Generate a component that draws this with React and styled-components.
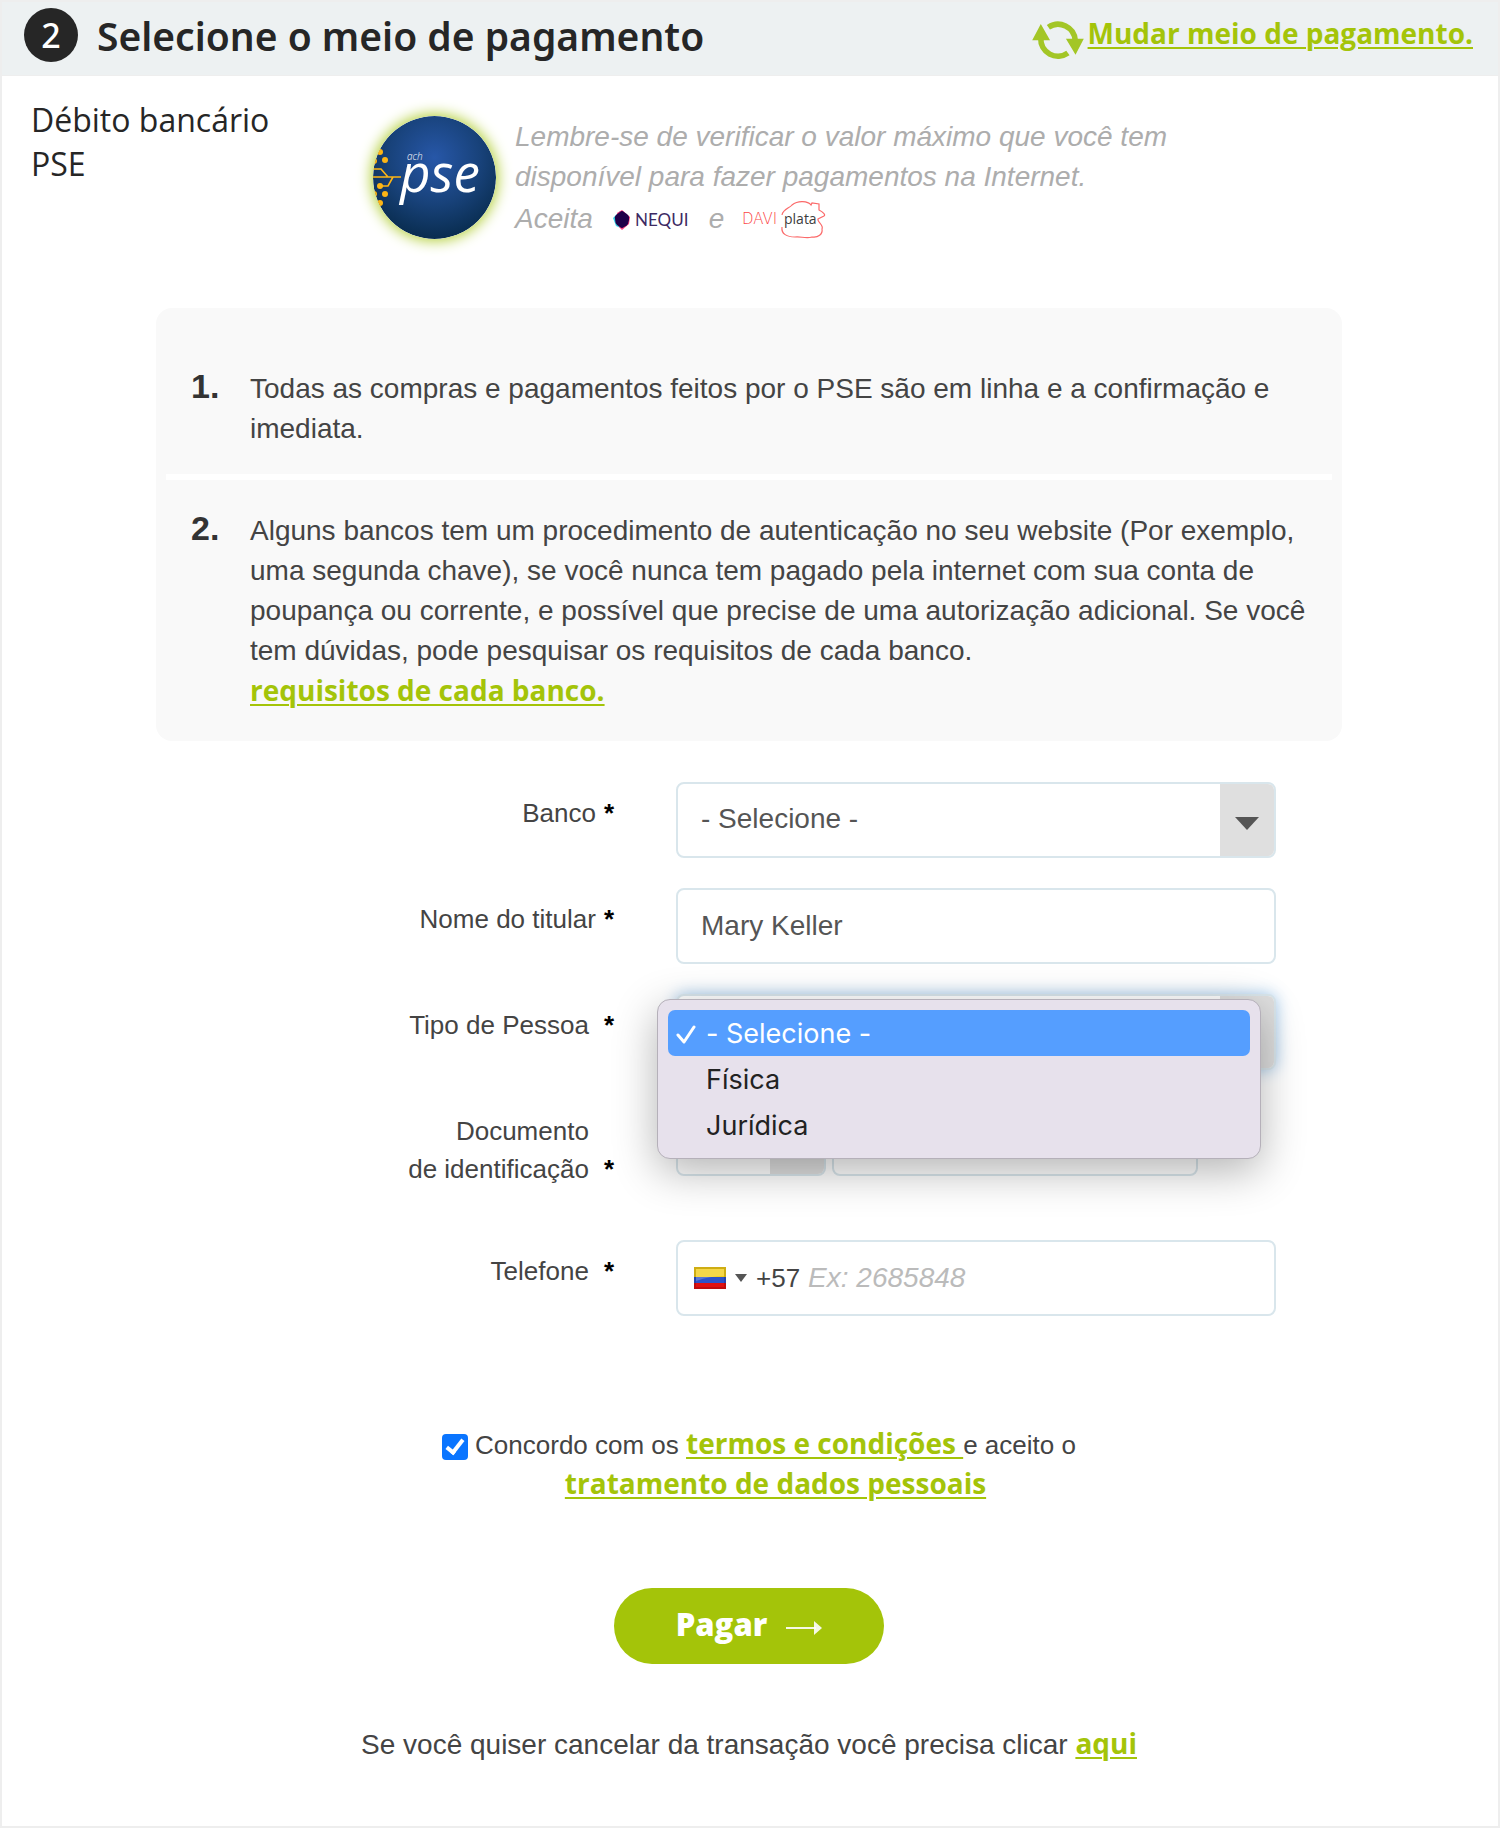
import React from "react";
import styled, { createGlobalStyle, css } from "styled-components";

const GlobalStyle = createGlobalStyle`
  *, *::before, *::after { box-sizing: border-box; }
  body {
    margin: 0;
    background: #fff;
    color: #444;
    font-family: "Liberation Sans", Arial, sans-serif;
    font-size: 28px;
    line-height: 40px;
  }
`;

const Page = styled.main`
  border: 2px solid #eee;
  padding-bottom: 61px;
`;

const Header = styled.header`
  display: flex;
  align-items: flex-start;
  gap: 19px;
  min-height: 74px;
  padding: 6px 25px 0 22px;
  background: #edf1f2;
  border-bottom: 1px solid #eee;
`;

const StepNumber = styled.span`
  flex: none;
  width: 54px;
  height: 54px;
  border-radius: 50%;
  background: #262626;
  color: #fff;
  font: 500 34px/54px "Noto Sans", sans-serif;
  text-align: center;
`;

const Title = styled.h1`
  flex: 1;
  margin: 0;
  color: #262626;
  font: 600 39px/56px "Noto Sans", sans-serif;
`;

const Link = styled.a`
  color: #a4c409;
  font-family: "Open Sans", sans-serif;
  font-weight: 700;
  font-size: 28px;
  line-height: 28px;
  text-decoration: underline;
  text-decoration-thickness: 2px;
  text-underline-offset: 3px;
`;

const BlockLink = styled(Link)`
  display: block;
  line-height: 38px;
`;

const ChangeMethod = styled.div`
  display: flex;
  align-items: flex-start;
  gap: 4px;
  padding-top: 6px;

  svg { margin-top: 5px; }
`;

const Method = styled.section`
  display: flex;
  align-items: flex-start;
  padding: 22px 29px 0;
  margin-bottom: 67px;
`;

const MethodName = styled.h2`
  flex: none;
  width: 342px;
  margin: 0;
  padding-right: 60px;
  color: #262626;
  font: 400 32px/44px "Open Sans", sans-serif;
`;

const MethodLogo = styled.svg`
  flex: none;
  width: 123px;
  height: 123px;
  margin-top: 18px;
  border-radius: 50%;
  box-shadow: 0 0 14px 2px #b3cf3a;
`;

const MethodNote = styled.div`
  max-width: 720px;
  margin: 19px 0 0 19px;
  color: #adadad;
  font-style: italic;

  p { margin: 0; }
`;

const Accepted = styled.p`
  display: flex;
  align-items: center;
  gap: 18px;
  height: 44px;

  svg {
    margin-top: 2px;
    font-style: normal;
  }
`;

const Content = styled.div`
  padding-right: 2px;
`;

const Notes = styled.ol`
  width: calc(100% - 40px);
  max-width: 1186px;
  margin: 0 auto 41px;
  padding: 30px 10px 0;
  border-radius: 16px;
  background: #f9f9f9;
  list-style: none;
`;

const Note = styled.li`
  display: flex;
  padding: 31px 16px 32px 25px;

  & + & {
    border-top: 6px solid #fff;
  }
  &:first-child {
    padding-bottom: 25px;
  }
`;

const NoteNumber = styled.b`
  flex: none;
  width: 59px;
  color: #333;
  font-size: 34px;
  line-height: 34px;
`;

const Form = styled.form`
  width: calc(100% - 40px);
  max-width: 1186px;
  margin: 0 auto;
`;

const Row = styled.div`
  display: grid;
  grid-template-columns: 458px minmax(0, 600px);
  align-items: start;
  column-gap: 62px;
  margin-bottom: ${(p) => (p.$last ? "109px" : p.$spaced ? "52px" : "30px")};
`;

const Label = styled.label`
  display: flex;
  justify-content: flex-end;
  align-items: flex-end;
  gap: ${(p) => (p.$wide ? "15px" : "8px")};
  padding-top: 12px;
  font-size: 26px;
  line-height: 38px;
  text-align: right;

  b { color: #000; }
`;

const field = css`
  display: block;
  width: 100%;
  height: 76px;
  border: 2px solid #d9e6ec;
  border-radius: 8px;
  background: #fff;
  color: #555;
  font: 400 28px/40px "Liberation Sans", Arial, sans-serif;
  outline: none;
`;

const Input = styled.input`
  ${field}
  padding: 0 23px;
`;

const Select = styled.select`
  ${field}
  appearance: none;
  padding: 0 60px 2px 23px;
  box-shadow: ${(p) => (p.$active ? "0 0 16px #a3cbee" : "none")};
`;

const SelectBox = styled.div`
  position: relative;
`;

const Arrow = styled.span`
  position: absolute;
  top: 2px;
  right: 2px;
  bottom: 2px;
  width: 54px;
  display: grid;
  place-items: center;
  padding-top: 6px;
  border-radius: 0 6px 6px 0;
  background: #dfdfdf;
  pointer-events: none;
`;

const Caret = styled.i`
  border: solid transparent;
  border-width: ${(p) => (p.$small ? "8px 6px 0" : "13px 12px 0")};
  border-top-color: #555;
`;

const OptionList = styled.ul`
  position: absolute;
  z-index: 1;
  top: 5px;
  left: -19px;
  width: calc(100% + 4px);
  margin: 0;
  padding: 10px;
  border: 1px solid #b5b0b9;
  border-radius: 13px;
  background: #e7e1ec;
  box-shadow: 0 12px 44px rgba(0, 0, 0, 0.3);
  color: #222;
  font: 400 27px/44px Inter, sans-serif;
  font-feature-settings: "calt" 0;
  list-style: none;
`;

const Option = styled.li`
  display: grid;
  grid-template-columns: 30px 1fr;
  align-items: center;
  padding: 2px 0 0 8px;
  border-radius: 7px;
  background: ${(p) => (p.$selected ? "#559eff" : "none")};
  color: ${(p) => (p.$selected ? "#fff" : "inherit")};

  span { grid-column: 2; }
`;

const DocumentFields = styled.div`
  display: grid;
  grid-template-columns: 150px 366px;
  gap: 6px;
`;

const Phone = styled.div`
  ${field}
  display: flex;
  align-items: center;
  padding-left: 16px;
`;

const CountryButton = styled.button`
  display: flex;
  align-items: center;
  gap: 9px;
  margin: 0;
  padding: 0;
  border: 0;
  background: none;
  color: #444;
  font: 400 26px/40px "Liberation Sans", Arial, sans-serif;
`;

const PhoneInput = styled.input`
  flex: 1;
  min-width: 0;
  border: 0;
  padding: 0 8px;
  background: none;
  font: 400 28px/40px "Liberation Sans", Arial, sans-serif;
  outline: none;

  &::placeholder {
    color: #bbb;
    font-style: italic;
    opacity: 1;
  }
`;

const Terms = styled.div`
  display: flex;
  justify-content: center;
  gap: 7px;
  margin-bottom: 83px;
  padding-left: 20px;
  font-size: 26px;
`;

const Checkbox = styled.input`
  appearance: none;
  flex: none;
  width: 26px;
  height: 26px;
  margin: 9px 0 0;
  border-radius: 4px;
  background: #0a75ff;
  display: grid;
  place-items: center;

  &::before {
    content: "";
    width: 10px;
    height: 18px;
    margin-bottom: 4px;
    border: solid #fff;
    border-width: 0 4px 4px 0;
    transform: rotate(38deg);
  }
`;

const TermsText = styled.label`
  text-align: center;
`;

const PayButton = styled.button`
  display: flex;
  align-items: center;
  justify-content: center;
  gap: 19px;
  width: 270px;
  height: 76px;
  margin: 0 auto 61px;
  padding: 0 0 4px;
  border: 0;
  border-radius: 38px;
  background: #a4c409;
  color: #fff;
  font: 800 31px/44px "Open Sans", sans-serif;

  svg { margin-top: 7px; }
`;

const Cancel = styled.p`
  margin: 0;
  text-align: center;
`;

function RefreshIcon() {
  return (
    <svg width="52" height="41" viewBox="96 58 156 124" fill="none" aria-hidden="true">
      <g stroke="#a3c626" strokeWidth="17">
        <path d="M145 83A52 52 0 0 1 226 122" />
        <path d="M122 116A52 52 0 0 0 204 161" />
      </g>
      <path fill="#a3c626" d="M198 118H252L227 166ZM96 122H150L122 73Z" />
    </svg>
  );
}

function PseLogo() {
  return (
    <MethodLogo viewBox="0 0 123 123" role="img" aria-label="ACH PSE">
      <defs>
        <radialGradient id="pse-bg" cx="50%" cy="34%" r="68%">
          <stop offset="0" stopColor="#2757a8" />
          <stop offset="0.55" stopColor="#18427a" />
          <stop offset="1" stopColor="#082b4c" />
        </radialGradient>
      </defs>
      <circle cx="61.500" cy="61.500" r="61.500" fill="url(#pse-bg)" />
      <g fill="#fdb515">
        <circle cx="7" cy="36" r="3" />
        <circle cx="12" cy="44" r="3" />
        <circle cx="1" cy="45" r="3" />
        <circle cx="7" cy="70" r="3" />
        <circle cx="12" cy="78" r="3" />
        <circle cx="1" cy="78" r="3" />
        <circle cx="7" cy="87" r="3" />
      </g>
      <path d="M0 61H28M0 53H8L15 61M7 70H15L20 61" fill="none" stroke="#fdb515" strokeWidth="1.600" />
      <text x="34" y="44" fill="#fff" fontFamily="Open Sans" fontWeight="300" fontStyle="italic" fontSize="10">ach</text>
      <text x="27" y="76" fill="#fff" fontFamily="Open Sans" fontStyle="italic" fontSize="53">pse</text>
    </MethodLogo>
  );
}

function NequiLogo() {
  return (
    <svg width="80" height="24" viewBox="-2 0 80 24" role="img" aria-label="Nequi">
      <path d="M0 10L7 3L14 6L8 15L10 21L3 18Z" fill="#38d3e8" />
      <path d="M4 5L9 2L17 9L16 16L9 22L6 19Z" fill="#ff3d7f" />
      <path d="M2 11Q1 9 3 7L7 4Q9 2 11 4L15 7Q17 9 16 12L15 16Q14 18 11 19Q9 21 7 19L4 17Q2 15 2 11Z" fill="#210049" />
      <text x="22" y="18" fill="#3d2a63" fontFamily="Lato" fontSize="17">NEQUI</text>
    </svg>
  );
}

function DaviplataLogo() {
  return (
    <svg width="86" height="40" viewBox="0 0 86 40" role="img" aria-label="Daviplata">
      <path
        d="M40 15C41 9 48 8 50 5C56 0 66 1 69 5L70 3L77 4L77 10C81 12 84 15 82 16L76 19C75 22 82 25 80 29C81 34 76 38 70 37C64 39 58 36 53 37C45 37 39 34 40 27"
        fill="none"
        stroke="#fb6a6a"
        strokeWidth="1.200"
      />
      <text x="0" y="24" fill="#fb4545" fontFamily="DejaVu Sans" fontWeight="200" fontSize="15">DAVI</text>
      <text x="42" y="24" fill="#3c3c3c" fontFamily="Open Sans" fontSize="14">plata</text>
    </svg>
  );
}

function ColombiaFlag() {
  return (
    <svg width="32" height="22" viewBox="0 0 32 22" aria-hidden="true">
      <path fill="#f3cc17" d="M0 0H32V11H0Z" />
      <path fill="#2c52c9" d="M0 10H32V16H0Z" />
      <path fill="#e01010" d="M0 16H32V22H0Z" />
      <path fill="#fff" opacity="0.22" d="M2 2H30V9Q16 9 2 14Z" />
      <path fill="none" stroke="#000" opacity="0.15" strokeWidth="2" d="M1 1H31V21H1Z" />
    </svg>
  );
}

export default function App() {
  return (
    <>
      <GlobalStyle />
      <Page>
        <Header>
          <StepNumber>2</StepNumber>
          <Title>Selecione o meio de pagamento</Title>
          <ChangeMethod>
            <RefreshIcon />
            <BlockLink href="#metodos">Mudar meio de pagamento.</BlockLink>
          </ChangeMethod>
        </Header>

        <Method>
          <MethodName>Débito bancário PSE</MethodName>
          <PseLogo />
          <MethodNote>
            <p>
              Lembre-se de verificar o valor máximo que você tem disponível para fazer pagamentos na Internet.
            </p>
            <Accepted>
              <span>Aceita</span>
              <NequiLogo />
              <span>e</span>
              <DaviplataLogo />
            </Accepted>
          </MethodNote>
        </Method>

        <Content>
          <Notes>
            <Note>
              <NoteNumber>1.</NoteNumber>
              <div>
                Todas as compras e pagamentos feitos por o PSE são em linha e a confirmação e imediata.
              </div>
            </Note>
            <Note>
              <NoteNumber>2.</NoteNumber>
              <div>
                Alguns bancos tem um procedimento de autenticação no seu website (Por exemplo, uma segunda
                chave), se você nunca tem pagado pela internet com sua conta de poupança ou corrente, e
                possível que precise de uma autorização adicional. Se você tem dúvidas, pode pesquisar os
                requisitos de cada banco.
                <BlockLink href="#requisitos">requisitos de cada banco.</BlockLink>
              </div>
            </Note>
          </Notes>

          <Form onSubmit={(e) => e.preventDefault()}>
            <Row>
              <Label htmlFor="banco">Banco<b>*</b></Label>
              <SelectBox>
                <Select id="banco">
                  <option>- Selecione -</option>
                </Select>
                <Arrow><Caret /></Arrow>
              </SelectBox>
            </Row>

            <Row>
              <Label htmlFor="titular">Nome do titular<b>*</b></Label>
              <Input id="titular" type="text" defaultValue="Mary Keller" />
            </Row>

            <Row>
              <Label htmlFor="pessoa" $wide>Tipo de Pessoa<b>*</b></Label>
              <SelectBox>
                <Select id="pessoa" $active defaultValue="">
                  <option value="" />
                  <option value="f">Física</option>
                  <option value="j">Jurídica</option>
                </Select>
                <Arrow><Caret /></Arrow>
                <OptionList role="listbox" aria-label="Tipo de Pessoa">
                  <Option role="option" aria-selected="true" $selected>
                    <svg width="20" height="20" viewBox="0 0 20 20" fill="none" stroke="#fff" strokeWidth="3" strokeLinecap="round" strokeLinejoin="round" aria-hidden="true">
                      <path d="M2 11L8 18L18 3" />
                    </svg>
                    <span>- Selecione -</span>
                  </Option>
                  <Option role="option" aria-selected="false"><span>Física</span></Option>
                  <Option role="option" aria-selected="false"><span>Jurídica</span></Option>
                </OptionList>
              </SelectBox>
            </Row>

            <Row $spaced>
              <Label htmlFor="documento" $wide>
                <span>Documento<br />de identificação</span><b>*</b>
              </Label>
              <DocumentFields>
                <SelectBox>
                  <Select aria-label="Tipo de documento">
                    <option value="" />
                  </Select>
                  <Arrow><Caret /></Arrow>
                </SelectBox>
                <Input id="documento" type="text" />
              </DocumentFields>
            </Row>

            <Row $last>
              <Label htmlFor="telefone" $wide>Telefone<b>*</b></Label>
              <Phone>
                <CountryButton type="button" aria-label="Colômbia +57">
                  <ColombiaFlag />
                  <Caret $small />
                  +57
                </CountryButton>
                <PhoneInput id="telefone" type="tel" placeholder="Ex: 2685848" />
              </Phone>
            </Row>

            <Terms>
              <Checkbox id="termos" type="checkbox" defaultChecked />
              <TermsText htmlFor="termos">
                Concordo com os <Link href="#termos">termos e condições </Link>e aceito o
                <br />
                <Link href="#dados">tratamento de dados pessoais</Link>
              </TermsText>
            </Terms>

            <PayButton type="submit">
              Pagar
              <svg width="36" height="14" viewBox="0 0 36 14" aria-hidden="true">
                <path d="M0 7H30" stroke="#fff" strokeWidth="2" opacity="0.9" />
                <path d="M28 0L36 7L28 14Z" fill="#fff" opacity="0.9" />
              </svg>
            </PayButton>
          </Form>

          <Cancel>
            Se você quiser cancelar da transação você precisa clicar <Link href="#cancelar">aqui</Link>
          </Cancel>
        </Content>
      </Page>
    </>
  );
}
